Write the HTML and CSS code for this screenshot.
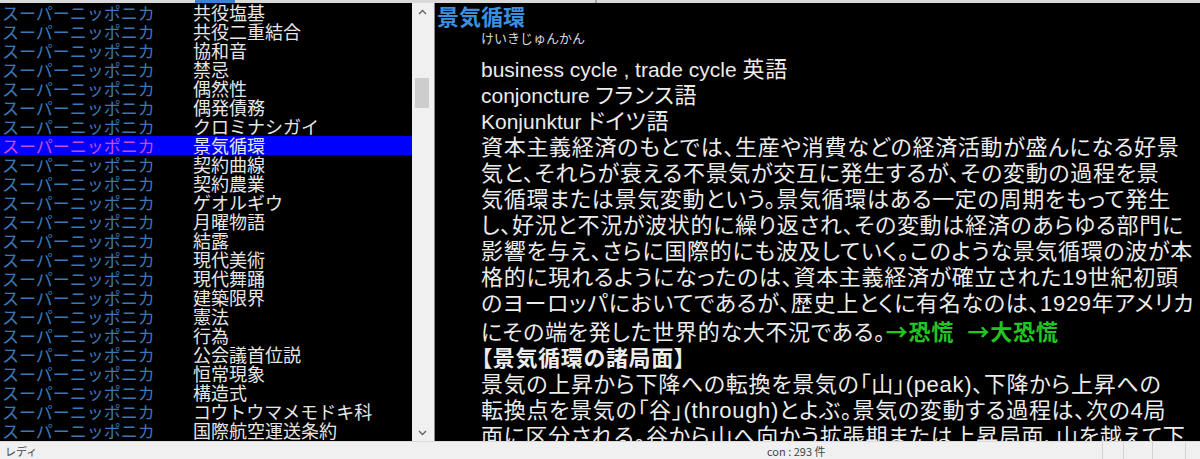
FILE: index.html
```html
<!DOCTYPE html>
<html lang="ja">
<head>
<meta charset="utf-8">
<title>景気循環</title>
<link rel="stylesheet" href="styles.css">
</head>
<body>
<div class="topbar"><span class="topbar-tab"></span><span class="topbar-sep"></span></div>
<div class="main">
  <div class="list">
    <div class="row"><span class="src">スーパーニッポニカ</span><span class="ttl">共役塩基</span></div>
    <div class="row"><span class="src">スーパーニッポニカ</span><span class="ttl">共役二重結合</span></div>
    <div class="row"><span class="src">スーパーニッポニカ</span><span class="ttl">協和音</span></div>
    <div class="row"><span class="src">スーパーニッポニカ</span><span class="ttl">禁忌</span></div>
    <div class="row"><span class="src">スーパーニッポニカ</span><span class="ttl">偶然性</span></div>
    <div class="row"><span class="src">スーパーニッポニカ</span><span class="ttl">偶発債務</span></div>
    <div class="row"><span class="src">スーパーニッポニカ</span><span class="ttl">クロミナシガイ</span></div>
    <div class="row selected"><span class="src">スーパーニッポニカ</span><span class="ttl">景気循環</span></div>
    <div class="row"><span class="src">スーパーニッポニカ</span><span class="ttl">契約曲線</span></div>
    <div class="row"><span class="src">スーパーニッポニカ</span><span class="ttl">契約農業</span></div>
    <div class="row"><span class="src">スーパーニッポニカ</span><span class="ttl">ゲオルギウ</span></div>
    <div class="row"><span class="src">スーパーニッポニカ</span><span class="ttl">月曜物語</span></div>
    <div class="row"><span class="src">スーパーニッポニカ</span><span class="ttl">結露</span></div>
    <div class="row"><span class="src">スーパーニッポニカ</span><span class="ttl">現代美術</span></div>
    <div class="row"><span class="src">スーパーニッポニカ</span><span class="ttl">現代舞踊</span></div>
    <div class="row"><span class="src">スーパーニッポニカ</span><span class="ttl">建築限界</span></div>
    <div class="row"><span class="src">スーパーニッポニカ</span><span class="ttl">憲法</span></div>
    <div class="row"><span class="src">スーパーニッポニカ</span><span class="ttl">行為</span></div>
    <div class="row"><span class="src">スーパーニッポニカ</span><span class="ttl">公会議首位説</span></div>
    <div class="row"><span class="src">スーパーニッポニカ</span><span class="ttl">恒常現象</span></div>
    <div class="row"><span class="src">スーパーニッポニカ</span><span class="ttl">構造式</span></div>
    <div class="row"><span class="src">スーパーニッポニカ</span><span class="ttl">コウトウマメモドキ科</span></div>
    <div class="row"><span class="src">スーパーニッポニカ</span><span class="ttl">国際航空運送条約</span></div>
  </div>
  <div class="vscroll">
    <div class="arrow">
      <svg width="9" height="6" viewBox="0 0 9 6"><path d="M1 5 L4.5 1.5 L8 5" fill="none" stroke="#606060" stroke-width="1.3"/></svg>
    </div>
    <div class="thumb"></div>
    <div class="track"></div>
    <div class="arrow">
      <svg width="9" height="6" viewBox="0 0 9 6"><path d="M1 1 L4.5 4.5 L8 1" fill="none" stroke="#606060" stroke-width="1.3"/></svg>
    </div>
  </div>
  <div class="splitter"></div>
  <div class="detail">
    <div class="head">景気循環</div>
    <div class="reading">けいきじゅんかん</div>
    <div class="body">
      <div class="line"><span class="lat">business cycle , trade cycle </span>英語</div>
      <div class="line"><span class="lat">conjoncture </span>フランス語</div>
      <div class="line"><span class="lat">Konjunktur </span>ドイツ語</div>
      <div class="line">資本主義経済のもとでは、生産や消費などの経済活動が盛んになる好景</div>
      <div class="line">気と、それらが衰える不景気が交互に発生するが、その変動の過程を景</div>
      <div class="line">気循環または景気変動という。景気循環はある一定の周期をもって発生</div>
      <div class="line">し、好況と不況が波状的に繰り返され、その変動は経済のあらゆる部門に</div>
      <div class="line">影響を与え、さらに国際的にも波及していく。このような景気循環の波が本</div>
      <div class="line">格的に現れるようになったのは、資本主義経済が確立された19世紀初頭</div>
      <div class="line">のヨーロッパにおいてであるが、歴史上とくに有名なのは、1929年アメリカ</div>
      <div class="line">にその端を発した世界的な大不況である。<span class="link">→恐慌</span>  <span class="link">→大恐慌</span></div>
      <div class="line section">【景気循環の諸局面】</div>
      <div class="line">景気の上昇から下降への転換を景気の「山」(peak)、下降から上昇への</div>
      <div class="line">転換点を景気の「谷」(through)とよぶ。景気の変動する過程は、次の4局</div>
      <div class="line">面に区分される。谷から山へ向かう拡張期または上昇局面、山を越えて下</div>
    </div>
  </div>
</div>
<div class="status">
  <div class="st-ready">レディ</div>
  <div class="st-count">con : 293 件</div>
  <div class="st-panes">
    <div class="pane p1"></div>
    <div class="pane p2"></div>
    <div class="pane p3"></div>
    <div class="pane p4"></div>
  </div>
</div>
</body>
</html>
```

FILE: styles.css
```css
html, body {
  margin: 0;
  padding: 0;
}
body {
  width: 1200px;
  height: 459px;
  overflow: hidden;
  background: #f0f0f0;
  font-family: "Noto Sans CJK JP", sans-serif;
}

.topbar {
  height: 3px;
  background: #d9d9d9;
  display: flex;
}
.topbar-tab {
  margin-left: 195px;
  width: 40px;
  background: #3b82d0;
}
.topbar-sep {
  margin-left: 360px;
  width: 2px;
  background: #a8a8a8;
}

.main {
  display: flex;
  height: 438px;
}

.list {
  width: 412px;
  background: #000;
  overflow: hidden;
}
.row {
  height: 19px;
  display: flex;
  align-items: center;
  white-space: nowrap;
}
.row .src {
  width: 191px;
  padding-left: 2px;
  color: #3a78b8;
  font-size: 17px;
  line-height: 19px;
}
.row .ttl {
  color: #e6e6e6;
  font-size: 18px;
  line-height: 19px;
}
.row.selected {
  background: #0000ff;
}
.row.selected .src {
  color: #c84ad8;
}

.vscroll {
  width: 20px;
  background: #f0f0f0;
  display: flex;
  flex-direction: column;
  align-items: center;
}
.arrow {
  height: 17px;
  display: flex;
  align-items: center;
  justify-content: center;
}
.thumb {
  margin-top: 58px;
  width: 14px;
  height: 30px;
  background: #cdcdcd;
}
.track {
  flex: 1;
}

.splitter {
  width: 2px;
  background: #f0f0f0;
}

.detail {
  flex: 1;
  background: #000;
  border-left: 1px solid #8a8a8a;
  overflow: hidden;
  padding-left: 2px;
}
.head {
  color: #3b8fdf;
  font-weight: bold;
  font-size: 22px;
  line-height: 25px;
}
.reading {
  padding-left: 44px;
  color: #d8d8d8;
  font-size: 13px;
  line-height: 20px;
}
.body {
  padding-left: 44px;
  margin-top: 9px;
  color: #ececec;
  font-family: "Liberation Sans", "Noto Sans CJK JP", sans-serif;
  font-size: 22px;
  font-feature-settings: "palt";
  letter-spacing: 0.7px;
}
.lat {
  letter-spacing: 0;
  font-size: 21px;
}
.line {
  line-height: 26px;
  white-space: pre;
}
.link {
  color: #22c622;
  font-weight: bold;
  font-family: "Noto Sans CJK JP", sans-serif;
}
.section {
  font-weight: bold;
}

.status {
  height: 18px;
  display: flex;
  align-items: center;
  font-size: 11px;
  color: #444;
  border-top: 1px solid #dadada;
  box-sizing: border-box;
}
.st-ready {
  width: 762px;
  padding-left: 5px;
}
.st-count {
  width: 335px;
}
.st-panes {
  display: flex;
  height: 100%;
}
.pane {
  border-left: 1px solid #d4d4d4;
}
.p1 { width: 20px; }
.p2 { width: 28px; }
.p3 { width: 32px; }
.p4 { width: 14px; }
```
